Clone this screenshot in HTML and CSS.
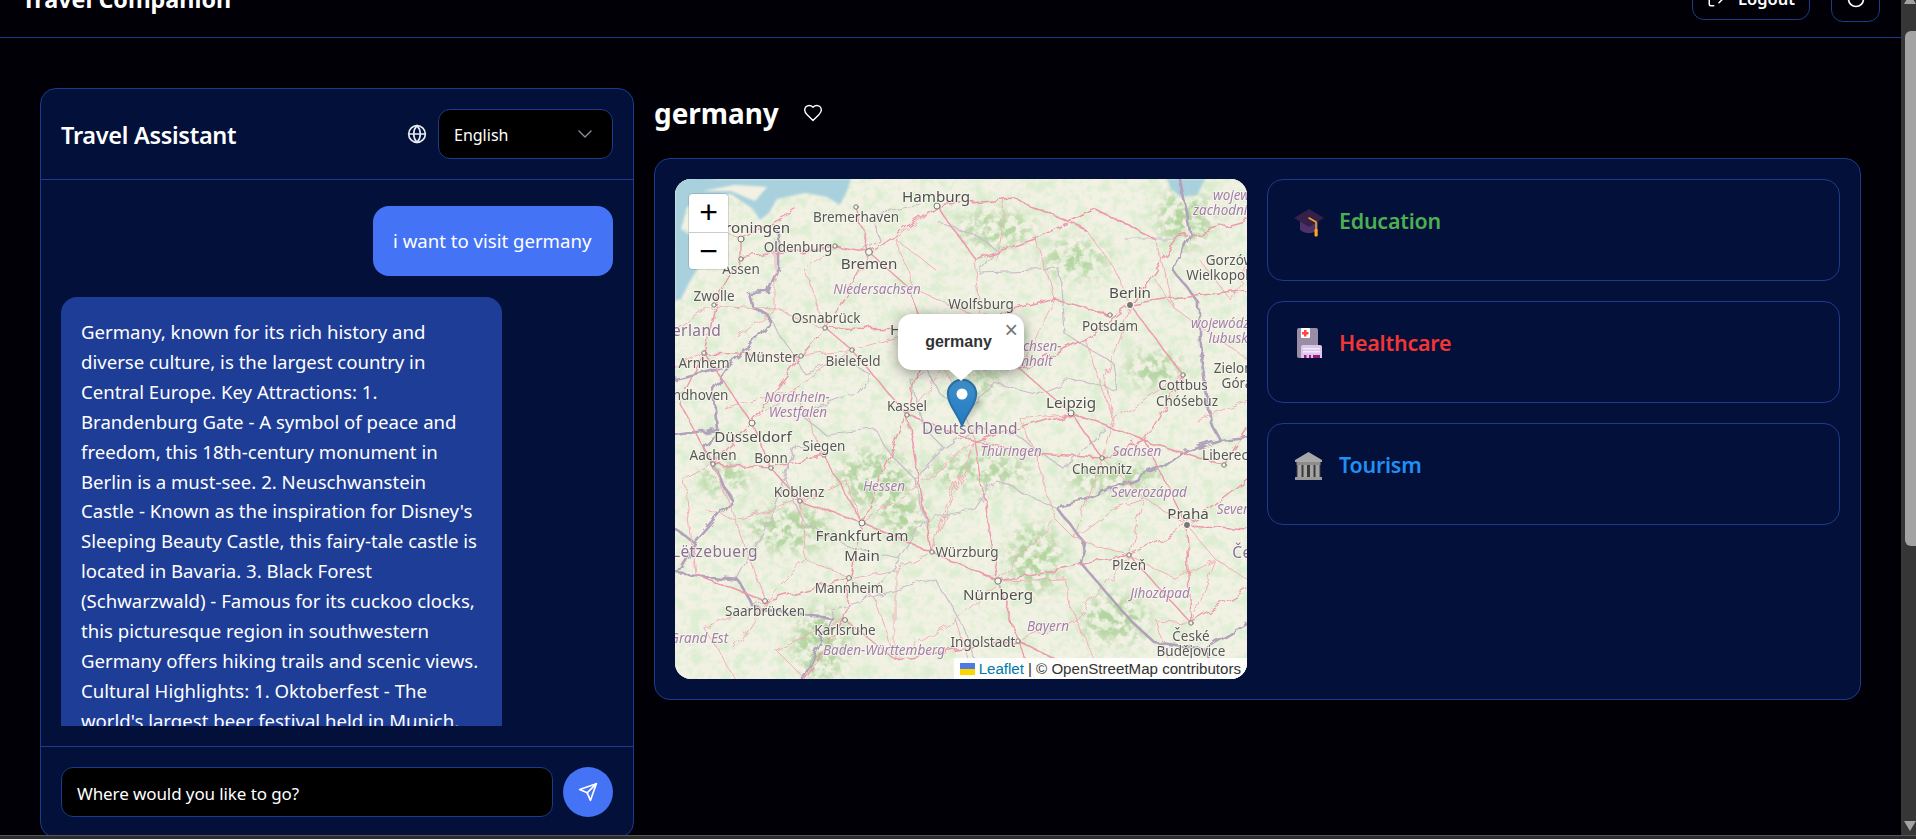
FILE: index.html
```html
<!DOCTYPE html>
<html lang="en">
<head>
<meta charset="utf-8">
<title>Travel Companion</title>
<link rel="stylesheet" href="styles.css">
</head>
<body>
<div class="viewport">
  <div class="page">
    <header class="topbar">
      <div class="brand">Travel Companion</div>
      <div class="top-actions">
        <button class="logout">
          <svg class="ico18" viewBox="0 0 24 24"><path d="M9 21H5a2 2 0 0 1-2-2V5a2 2 0 0 1 2-2h4"/><path d="m16 17 5-5-5-5"/><path d="M21 12H9"/></svg>
          <span>Logout</span>
        </button>
        <button class="theme">
          <svg class="ico20" viewBox="0 0 24 24"><circle cx="12" cy="12" r="9"/></svg>
        </button>
      </div>
    </header>

    <main class="layout">
      <section class="chat">
        <div class="chat-head">
          <h2>Travel Assistant</h2>
          <div class="lang">
            <svg class="ico20" viewBox="0 0 24 24"><circle cx="12" cy="12" r="10"/><path d="M12 2a14.5 14.5 0 0 0 0 20 14.5 14.5 0 0 0 0-20"/><path d="M2 12h20"/></svg>
            <div class="select">
              <span>English</span>
              <svg class="chev" viewBox="0 0 24 24"><path d="m6 9 6 6 6-6"/></svg>
            </div>
          </div>
        </div>
        <div class="chat-body">
          <div class="messages">
            <div class="msg user">i want to visit germany</div>
            <div class="msg bot">Germany, known for its rich history and<br>diverse culture, is the largest country in<br>Central Europe. Key Attractions: 1.<br>Brandenburg Gate - A symbol of peace and<br>freedom, this 18th-century monument in<br>Berlin is a must-see. 2. Neuschwanstein<br>Castle - Known as the inspiration for Disney's<br>Sleeping Beauty Castle, this fairy-tale castle is<br>located in Bavaria. 3. Black Forest<br>(Schwarzwald) - Famous for its cuckoo clocks,<br>this picturesque region in southwestern<br>Germany offers hiking trails and scenic views.<br>Cultural Highlights: 1. Oktoberfest - The<br>world's largest beer festival held in Munich.</div>
          </div>
        </div>
        <div class="chat-input">
          <div class="field">Where would you like to go?</div>
          <button class="send">
            <svg class="ico20" viewBox="0 0 24 24"><path d="m22 2-7 20-4-9-9-4Z"/><path d="M22 2 11 13"/></svg>
          </button>
        </div>
      </section>

      <section class="detail">
        <div class="detail-head">
          <h1>germany</h1>
          <svg class="heart" viewBox="0 0 24 24"><path d="M19 14c1.49-1.46 3-3.21 3-5.5A5.5 5.5 0 0 0 16.500 3c-1.760 0-3 .5-4.500 2-1.500-1.500-2.740-2-4.500-2A5.500 5.500 0 0 0 2 8.500c0 2.300 1.500 4.050 3 5.500l7 7Z"/></svg>
        </div>
        <div class="panel">
          <div class="map">
            <svg class="tiles" viewBox="0 0 572 500" preserveAspectRatio="none">
              <defs>
                <filter id="patches" x="0" y="0" width="100%" height="100%">
                  <feTurbulence type="fractalNoise" baseFrequency="0.07" numOctaves="4" seed="11"/>
                  <feColorMatrix values="0 0 0 0 0.72  0 0 0 0 0.85  0 0 0 0 0.64  3.6 0 0 0 -1.8"/>
                </filter>
                <filter id="fine" x="0" y="0" width="100%" height="100%">
                  <feTurbulence type="fractalNoise" baseFrequency="0.16" numOctaves="3" seed="4"/>
                  <feColorMatrix values="0 0 0 0 0.76  0 0 0 0 0.87  0 0 0 0 0.68  0 4.2 0 0 -2.1"/>
                </filter>
                <filter id="wobble" x="-5%" y="-5%" width="110%" height="110%">
                  <feTurbulence type="fractalNoise" baseFrequency="0.06" numOctaves="3" seed="7" result="n"/>
                  <feDisplacementMap in="SourceGraphic" in2="n" scale="10"/>
                  <feGaussianBlur stdDeviation="0.35"/>
                </filter>
                <filter id="soft" x="-10%" y="-10%" width="120%" height="120%">
                  <feGaussianBlur stdDeviation="9" result="b"/>
                  <feTurbulence type="fractalNoise" baseFrequency="0.12" numOctaves="3" seed="21"/>
                  <feColorMatrix result="noise" values="0 0 0 0 1  0 0 0 0 1  0 0 0 0 1  5 0 0 0 -2.1"/>
                  <feComposite in="b" in2="noise" operator="in"/>
                </filter>
                <filter id="soft1"><feGaussianBlur stdDeviation="0.8"/></filter>
              </defs>

              <rect class="land" width="572" height="500"/>
              <rect width="572" height="500" filter="url(#fine)"/>
              <rect width="572" height="500" filter="url(#patches)"/>
              <g class="woods" filter="url(#soft)">
                <ellipse cx="300" cy="205" rx="30" ry="13"/><ellipse cx="305" cy="292" rx="55" ry="16"/>
                <ellipse cx="200" cy="300" rx="38" ry="30"/><ellipse cx="440" cy="300" rx="50" ry="15"/>
                <ellipse cx="115" cy="350" rx="42" ry="24"/><ellipse cx="145" cy="465" rx="28" ry="38"/>
                <ellipse cx="440" cy="440" rx="35" ry="24"/><ellipse cx="360" cy="380" rx="28" ry="34"/>
                <ellipse cx="230" cy="340" rx="25" ry="22"/><ellipse cx="320" cy="50" rx="40" ry="18"/>
                <ellipse cx="400" cy="80" rx="34" ry="18"/><ellipse cx="510" cy="40" rx="28" ry="30"/>
                <ellipse cx="480" cy="190" rx="30" ry="18"/><ellipse cx="50" cy="300" rx="25" ry="18"/>
              </g>
              <g filter="url(#soft1)">
                <path class="water" d="M0 0H176L172 12 165 26 152 18 130 14 102 20 94 34 85 41 78 30 56 15 30 18 12 28 6 50 24 62 26 84 14 104 6 120 0 122Z"/>
                <path class="land" d="M28 12 60 6 92 8 80 22 56 12Z"/>
                <path class="water" d="M492 0H530L522 16 505 18 496 10Z"/>
                <path class="water" d="M0 -2H40L0 20Z"/>
              </g>

              <g class="net" filter="url(#wobble)">
                <path class="state" d="M304 94 385 91 389 154 438 184 442 211 396 200 360 215 320 205 290 230 265 215 252 190 235 200 250 250 270 270 240 300 215 275 200 250 150 255 125 235 180 215 195 195 170 180 130 195 108 160 95 140M304 94 320 70 300 55 265 45M430 250 389 290 340 255 300 250 270 270M240 300 250 340 225 380 180 370 130 345 110 300 120 265 145 270M225 380 190 420 155 430M190 420 260 400 290 450 300 480 330 500M250 340 300 330 320 300 350 315 381 328M155 430 157 439M120 265 95 340 63 401M450 60 504 60M190 70 205 62 200 45 215 30 245 25"/>
                <path class="border" d="M103 53 103 89 93 113 73 114 77 128 93 136 93 144 75 169 55 186 38 210 42 250 30 270 42 294 57 321 20 364 2 394M2 394 63 401 79 428 128 436 157 439 134 488 128 500M545 261 512 271 488 288 451 304 410 321 381 328 410 364 406 384 455 441 479 463 530 470 540 500M504 0 516 57 498 91 524 124 524 164 536 244 545 261 572 258M20 364 0 350M530 470 572 445M55 186 0 200 M42 250 0 256"/>
                <path class="road3" d="M20 40 66 60M0 150 39 126M0 190 29 174M100 60 100 130 150 149M100 130 39 126M130 90 160 67M130 90 150 149M220 60 262 27M220 60 240 110 306 140M300 80 306 140M360 60 380 120M410 50 440 90 455 126M480 60 500 130 572 180M380 120 345 190M410 160 438 240M438 240 427 279M438 240 508 196M520 240 572 220M177 171 250 150M177 171 126 177M120 210 177 171M120 210 77 244M120 210 149 276M232 236 270 190 345 190M270 190 300 262M300 262 257 373M360 275 380 340 323 402M427 279 400 360 454 376M400 360 380 340M60 340 125 322M60 340 38 285M60 340 90 422M30 450 90 422M30 450 60 500M130 380 125 322M130 380 174 399M130 380 90 422M220 390 257 373M220 390 220 480M220 390 174 399M280 440 323 402M280 440 220 480M280 440 300 500M400 440 343 462M400 440 454 376M400 440 430 500M480 440 516 444M480 440 500 500M540 380 512 346M540 380 516 444M540 380 572 400M10 300 38 285M10 300 20 395M250 300 300 262M250 300 187 344M470 320 512 346M470 320 427 279M470 320 454 376M330 20 320 80M260 90 220 60M60 160 100 130M50 230 120 210M170 300 125 322M170 300 187 344M30 330 60 340M345 240 396 234M345 240 360 275M200 420 174 399M200 420 220 480M60 470 90 422M100 470 130 500M100 470 170 441M390 400 323 402M390 400 400 440M440 330 470 320M440 330 400 360M500 400 454 376M500 400 540 380M555 120 524 80M555 120 572 90M480 100 500 130M430 200 438 240M430 200 455 126M270 330 300 262M270 330 257 373"/>
                <path class="road2" d="M262 27 300 80 360 60 420 30 480 60M262 27 340 20 410 50M194 73 235 110 250 150M250 150 306 140 345 190 396 234M345 190 410 160 455 126M306 140 380 120 435 136M150 149 126 177 77 244M150 149 177 171 232 236M232 236 300 262 396 234M300 262 360 275 427 279M396 234 470 262 512 346M470 262 549 286M508 196 455 126M508 196 470 262M396 234 427 279 470 262M187 344 232 236M187 344 149 276 96 289 77 244M187 344 257 373 323 402M187 344 174 399 170 441M174 399 90 422M90 422 20 395M125 322 187 344M125 322 96 289M38 285 96 289M38 285 77 244M323 402 343 462 360 500M323 402 300 262M323 402 454 376 512 346M512 346 516 444M170 441 130 500M170 441 220 480 343 462M257 373 232 236M420 500 343 462M454 376 516 444M516 444 572 410M39 126 29 174 4 224M39 126 66 80 66 60 120 30M66 80 160 67M160 67 194 73 181 28M194 73 262 27M194 73 150 149M250 150 150 149M250 150 232 236M29 174 126 177M29 174 77 244M455 126 572 110M455 126 500 60 572 40M512 346 572 300M512 346 572 350M549 286 572 250M4 224 38 285"/>
              </g>

              <g class="cities">
                <circle cx="262" cy="27" r="3"/><circle cx="181" cy="28" r="2.200"/><circle cx="160" cy="67" r="2.200"/><circle cx="194" cy="73" r="3.400"/><circle cx="66" cy="60" r="3"/><circle cx="66" cy="80" r="2.200"/><circle cx="39" cy="126" r="2.200"/><circle cx="150" cy="149" r="2.200"/><circle cx="126" cy="177" r="2.200"/><circle cx="177" cy="171" r="2.200"/><circle cx="29" cy="174" r="2.200"/><circle cx="232" cy="236" r="2.200"/><circle cx="77" cy="244" r="3"/><circle cx="435" cy="136" r="2.200"/><circle cx="396" cy="234" r="3"/><circle cx="508" cy="196" r="2.200"/><circle cx="427" cy="279" r="2.200"/><circle cx="96" cy="289" r="2.200"/><circle cx="38" cy="285" r="2.200"/><circle cx="149" cy="276" r="2.200"/><circle cx="125" cy="322" r="2.200"/><circle cx="187" cy="344" r="3"/><circle cx="257" cy="373" r="2.200"/><circle cx="454" cy="376" r="2.200"/><circle cx="174" cy="399" r="2.400"/><circle cx="323" cy="402" r="3.200"/><circle cx="90" cy="422" r="2.400"/><circle cx="170" cy="441" r="2.400"/><circle cx="343" cy="462" r="2.200"/><circle cx="516" cy="444" r="2.200"/><circle cx="549" cy="286" r="2.200"/>
                <circle class="cap" cx="455" cy="126" r="3.600"/><circle class="cap" cx="512" cy="346" r="3.600"/>
              </g>

              <g class="labels">
                <text class="big" x="261" y="17">Hamburg</text>
                <text class="mid" x="181" y="38">Bremerhaven</text>
                <text class="big" x="77" y="48">Groningen</text>
                <text class="mid" x="123" y="68">Oldenburg</text>
                <text class="big" x="194" y="84">Bremen</text>
                <text class="mid" x="66" y="90">Assen</text>
                <text class="mid" x="39" y="117">Zwolle</text>
                <text class="mid" x="306" y="125">Wolfsburg</text>
                <text class="big" x="455" y="113">Berlin</text>
                <text class="mid" x="555" y="81">Gorzów</text>
                <text class="mid" x="551" y="96">Wielkopolski</text>
                <text class="mid" x="435" y="147">Potsdam</text>
                <text class="mid" x="151" y="139">Osnabrück</text>
                <text class="big" x="250" y="150">Hannover</text>
                <text class="mid" x="96" y="178">Münster</text>
                <text class="mid" x="178" y="182">Bielefeld</text>
                <text class="mid" x="29" y="184">Arnhem</text>
                <text class="mid" x="20" y="216">Eindhoven</text>
                <text class="mid" x="232" y="227">Kassel</text>
                <text class="big" x="396" y="223">Leipzig</text>
                <text class="big" x="78" y="257">Düsseldorf</text>
                <text class="mid" x="508" y="206">Cottbus</text>
                <text class="mid" x="512" y="222">Chóśebuz</text>
                <text class="mid" x="149" y="267">Siegen</text>
                <text class="mid" x="562" y="189">Zielona</text>
                <text class="mid" x="562" y="204">Góra</text>
                <text class="mid" x="550" y="276">Liberec</text>
                <text class="mid" x="38" y="276">Aachen</text>
                <text class="mid" x="96" y="279">Bonn</text>
                <text class="mid" x="427" y="290">Chemnitz</text>
                <text class="mid" x="124" y="313">Koblenz</text>
                <text class="big" x="513" y="334">Praha</text>
                <text class="big" x="187" y="356">Frankfurt am</text>
                <text class="big" x="187" y="376">Main</text>
                <text class="mid" x="292" y="373">Würzburg</text>
                <text class="mid" x="454" y="386">Plzeň</text>
                <text class="mid" x="174" y="409">Mannheim</text>
                <text class="big" x="323" y="415">Nürnberg</text>
                <text class="mid" x="90" y="432">Saarbrücken</text>
                <text class="mid" x="170" y="451">Karlsruhe</text>
                <text class="mid" x="516" y="457">České</text>
                <text class="mid" x="516" y="472">Budějovice</text>
                <text class="mid" x="308" y="463">Ingolstadt</text>

                <text class="region" x="202" y="110">Niedersachsen</text>
                <text class="region" x="122" y="218">Nordrhein-</text>
                <text class="region" x="123" y="233">Westfalen</text>
                <text class="region" x="360" y="167">Sachsen-</text>
                <text class="region" x="358" y="182">Anhalt</text>
                <text class="region" x="336" y="272">Thüringen</text>
                <text class="region" x="462" y="272">Sachsen</text>
                <text class="region" x="209" y="307">Hessen</text>
                <text class="region" x="474" y="313">Severozápad</text>
                <text class="region" x="485" y="414">Jihozápad</text>
                <text class="region" x="373" y="447">Bayern</text>
                <text class="region" x="24" y="459">Grand Est</text>
                <text class="region" x="209" y="471">Baden-Württemberg</text>
                <text class="region" x="558" y="16">wojew.</text>
                <text class="region" x="549" y="31">zachodnio</text>
                <text class="region" x="547" y="144">wojewódz.</text>
                <text class="region" x="555" y="159">lubusk.</text>
                <text class="region" x="563" y="330">Severo.</text>
                <text class="country" x="6" y="151">Nederland</text>
                <text class="country" x="295" y="249">Deutschland</text>
                <text class="country" x="40" y="372">Lëtzebuerg</text>
                <text class="country" x="580" y="373">Česko</text>
              </g>
            </svg>

            <svg class="marker" viewBox="0 0 30 48">
              <defs>
                <linearGradient id="pin" x1="0" y1="0" x2="0" y2="1"><stop offset="0" stop-color="#3f8fc6"/><stop offset="1" stop-color="#2379c4"/></linearGradient>
              </defs>
              <path class="pin-shadow" d="M15 47 L31 27 Q38 24 32 20 L24 18Z"/>
              <path fill="url(#pin)" stroke="#2a6fa8" d="M15 47C11 35 .8 26 .8 15A14.200 14.200 0 0 1 29.200 15C29.200 26 19 35 15 47Z"/>
              <circle cx="15" cy="15" r="5.500" fill="#fff"/>
            </svg>

            <div class="popup">
              <span class="popup-x">×</span>
              <b>germany</b>
              <i class="popup-tip"></i>
            </div>

            <div class="zoom">
              <div class="zoom-btn">+</div>
              <div class="zoom-btn">−</div>
            </div>

            <div class="attrib">
              <svg class="flag" viewBox="0 0 15 12"><rect width="15" height="6" fill="#4c7be1"/><rect y="6" width="15" height="6" fill="#ffd500"/></svg>
              <a>Leaflet</a> | © OpenStreetMap contributors
            </div>
          </div>

          <div class="cards">
            <div class="card">
              <svg class="cat" viewBox="0 0 32 32">
                <path fill="#4f3269" d="M7 15v8c0 2 5 4 9 4s9-2 9-4v-8z"/>
                <path fill="#35204a" d="M1 12 16 3l15 9-15 9z"/>
                <path fill="none" stroke="#f9a825" stroke-width="1.500" d="M16 12l7 4v8"/>
                <rect x="21.500" y="23" width="3.200" height="7.500" rx="1" fill="#f9a825"/>
              </svg>
              <span class="green">Education</span>
            </div>
            <div class="card">
              <svg class="cat" viewBox="0 0 32 32">
                <rect x="4" y="0" width="21" height="30" rx="2" fill="#9a8ea6"/>
                <rect x="8" y="0" width="9" height="10" rx="1" fill="#fff"/>
                <path fill="#f44" d="M11 2h2.500v2H15.500v2.500h-2v2H11v-2H9V4h2z"/>
                <path fill="#d9c8ec" d="M8 19a2 2 0 0 1 2-2h17a2 2 0 0 1 2 2v11H8z"/>
                <path fill="#f3e8fb" d="M10 20h17v1.500H10zM10 23h17v1.500H10z"/>
                <path fill="#a01a7d" d="M11 27h2.500v3H11zM16 27h2v3h-2zM20 27h7v3h-7z"/>
              </svg>
              <span class="red">Healthcare</span>
            </div>
            <div class="card">
              <svg class="cat" viewBox="0 0 32 32">
                <path fill="#a8a8a8" d="M15.500 2 29 10v2H2v-2z"/>
                <rect x="3.500" y="12" width="24" height="3" fill="#8c8c8c"/>
                <rect x="3.500" y="15" width="24" height="12" fill="#3a3a3a"/>
                <path fill="#a5a5a5" d="M4.500 15h4v12h-4zM10.500 15h3.500v12h-3.500zM17 15h3.500v12H17zM22.500 15h4v12h-4z"/>
                <rect x="2" y="27" width="27" height="3" fill="#9a9a9a"/>
              </svg>
              <span class="blue">Tourism</span>
            </div>
          </div>
        </div>
      </section>
    </main>
  </div>

  <div class="scrollbar">
    <i class="arrow-up"></i>
    <i class="thumb"></i>
    <i class="arrow-down"></i>
  </div>
  <div class="statusline"></div>
</div>
</body>
</html>
```
FILE: styles.css
```css
* { box-sizing: border-box; }
html, body { margin: 0; height: 100%; overflow: hidden; background: #000006; }
body { font-family: "Noto Sans", "Open Sans", sans-serif; color: #fff; }
button { font: inherit; color: inherit; cursor: pointer; }
h1, h2 { margin: 0; }

.viewport { position: relative; width: 1916px; height: 839px; overflow: hidden; }
.page { width: 1901px; margin-top: -40px; }

svg { fill: none; stroke: currentColor; stroke-width: 2; stroke-linecap: round; stroke-linejoin: round; }
.ico18 { width: 18px; height: 18px; flex: none; }
.ico20 { width: 20px; height: 20px; flex: none; }

/* top bar (page is scrolled 40px) */
.topbar { height: 78px; border-bottom: 1px solid #1e3a8a; padding: 0 21px 0 22px; display: flex; align-items: center; justify-content: space-between; }
.brand { font-size: 23.300px; font-weight: 700; }
.top-actions { display: flex; align-items: center; gap: 21px; }
.logout { height: 42px; width: 118px; display: flex; align-items: center; justify-content: center; gap: 13px; background: transparent; border: 1px solid #1e3a8a; border-radius: 12px; font-size: 16.500px; font-weight: 600; padding: 0; }
.theme { height: 46px; width: 49px; display: flex; align-items: center; justify-content: center; background: transparent; border: 1px solid #1e3a8a; border-radius: 12px; padding: 0; }

/* two-column layout */
.layout { display: grid; grid-template-columns: 594px 1fr; gap: 20px; padding: 50px 40px 0; }

.chat { height: 750px; background: #02103a; border: 1px solid #1e3a8a; border-radius: 16px; display: flex; flex-direction: column; overflow: hidden; }
.chat-head { height: 91px; flex: none; border-bottom: 1px solid #1e3a8a; padding: 0 20px; display: flex; align-items: center; justify-content: space-between; }
.chat-head h2 { font-size: 23.500px; font-weight: 600; letter-spacing: -.3px; padding-top: 2px; }
.lang { display: flex; align-items: center; gap: 11px; color: #e8eaf2; }
.select { width: 175px; height: 50px; padding: 2px 15px 0 15px; background: #000; border: 1px solid #1e3a8a; border-radius: 12px; display: flex; align-items: center; justify-content: space-between; color: #fff; font-size: 16px; }
.chev { width: 24px; height: 24px; margin-top: -2px; color: #8b8f9c; stroke-width: 1.400; }

.chat-body { flex: 1; min-height: 0; padding: 26px 20px 20px; border-bottom: 1px solid #1e3a8a; }
.messages { height: 100%; overflow: hidden; display: flex; flex-direction: column; align-items: flex-start; gap: 21px; }
.msg { padding: 20px; border-radius: 16px; font-size: 18.600px; line-height: 29.900px; white-space: nowrap; flex: none; }
.msg.user { align-self: flex-end; width: 240px; height: 70px; background: #4474f5; }
.msg.bot { width: 441px; background: #1e3d96; }

.chat-input { flex: none; padding: 20px; display: flex; gap: 10px; }
.field { flex: 1; height: 50px; padding: 2px 15px 0; background: #000; border: 1px solid #1e3a8a; border-radius: 12px; display: flex; align-items: center; font-size: 17px; letter-spacing: -.1px; }
.send { width: 50px; height: 50px; flex: none; background: #4474f5; border: 0; border-radius: 50%; display: flex; align-items: center; justify-content: center; padding: 0; }

/* destination detail */
.detail-head { height: 50px; margin-bottom: 20px; display: flex; align-items: center; gap: 24px; }
.detail-head h1 { font-size: 27.900px; font-weight: 700; }
.heart { width: 20px; height: 20px; stroke-width: 1.700; }
.panel { height: 542px; background: #02103a; border: 1px solid #1e3a8a; border-radius: 16px; padding: 20px; display: grid; grid-template-columns: 572px 1fr; gap: 20px; }

.map { position: relative; height: 500px; border-radius: 16px; overflow: hidden; background: #f2efe4; }
.tiles { position: absolute; inset: 0; width: 100%; height: 100%; stroke: none; display: block; }
.land { fill: #f2f1e4; }
.water { fill: #a9d1dd; }
.woods { fill: #a4cc90; opacity: .8; }
.net { fill: none; }
.road2 { stroke: #ee98ab; stroke-width: 1.400; fill: none; }
.road3 { stroke: #f3aeb9; stroke-width: 1; fill: none; }
.state { stroke: #c9bccb; stroke-width: 1.200; fill: none; }
.border { stroke: #b1a1ba; stroke-width: 2.600; fill: none; }
.cities circle { fill: #f6f4ec; stroke: #7b7b75; stroke-width: 1; }
.cities .cap { fill: #777; stroke: #f6f4ec; stroke-width: 1.400; }
.labels { filter: blur(.25px); }
.labels text { font-family: "Noto Sans", sans-serif; text-anchor: middle; dominant-baseline: central; stroke: rgba(250,248,240,.75); stroke-width: 2; paint-order: stroke; stroke-linejoin: round; }
.mid { font-size: 13.500px; fill: #575757; }
.big { font-size: 15.200px; fill: #505050; }
.region { font-size: 13.500px; font-style: italic; fill: #a27ea8; }
.country { font-size: 15.500px; fill: #8a6f92; letter-spacing: .4px; }

.marker { position: absolute; left: 272px; top: 200px; width: 30px; height: 48px; stroke: none; overflow: visible; }
.pin-shadow { fill: rgba(40,40,30,.28); filter: blur(3px); }

.popup { position: absolute; left: 223px; top: 135px; width: 126px; height: 56px; background: #fff; border-radius: 14px; box-shadow: 0 3px 14px rgba(0,0,0,.4); font-family: "Liberation Sans", Arial, sans-serif; font-size: 16px; color: #333; display: flex; align-items: center; justify-content: center; padding: 0 5px 0 0; }
.popup b { position: relative; top: 0; }
.popup-x { position: absolute; right: 6px; top: 4px; font-size: 23px; line-height: 24px; font-family: "Liberation Sans", sans-serif; color: #757575; }
.popup-tip { position: absolute; left: 50%; top: 100%; margin-left: -12px; width: 0; height: 0; border-left: 12px solid transparent; border-right: 12px solid transparent; border-top: 11px solid #fff; }

.zoom { position: absolute; left: 14px; top: 15px; width: 39px; border-radius: 4px; overflow: hidden; box-shadow: 0 0 0 1px rgba(0,0,0,.12); }
.zoom-btn { height: 37.500px; background: #fff; color: #000; font-family: "Liberation Sans", Arial, sans-serif; font-size: 32px; line-height: 37px; text-align: center; }
.zoom-btn + .zoom-btn { border-top: 1px solid #ccc; }

.attrib { position: absolute; right: 0; bottom: 0; height: 21px; padding: 0 6px; background: rgba(255,255,255,.88); color: #333; font-family: "Liberation Sans", Arial, sans-serif; font-size: 15.100px; line-height: 21px; white-space: nowrap; display: flex; align-items: center; gap: 4px; }
.attrib a { color: #0078a8; }
.flag { width: 15px; height: 12px; stroke: none; }

.cards { display: flex; flex-direction: column; gap: 20px; }
.card { height: 102px; padding: 20px 25px; border: 1px solid #1e3a8a; border-radius: 16px; display: flex; align-items: flex-start; gap: 14px; font-size: 21.400px; font-weight: 600; line-height: 42px; letter-spacing: -.2px; }
.cat { width: 32px; height: 32px; flex: none; stroke: none; margin-top: 6px; }
.green { color: #4caf50; }
.red { color: #f33535; }
.blue { color: #2090f5; }

/* window chrome: native scrollbar and the bottom edge */
.scrollbar { position: absolute; right: 0; top: 0; width: 15px; height: 839px; background: #363636; }
.thumb { position: absolute; left: 4px; top: 31px; width: 12px; height: 515px; background: #a3a3a3; border-radius: 6px 0 0 6px; }
.arrow-up { position: absolute; left: 3px; top: -6px; border: 6px solid transparent; border-top: 0; border-bottom: 10px solid #a3a3a3; }
.arrow-down { position: absolute; left: 3px; top: 821px; border: 6px solid transparent; border-bottom: 0; border-top: 10px solid #a3a3a3; }
.statusline { position: absolute; left: 0; bottom: 0; width: 100%; height: 4px; background: #2e2e2e; border-top: 1px solid #555; }
```
